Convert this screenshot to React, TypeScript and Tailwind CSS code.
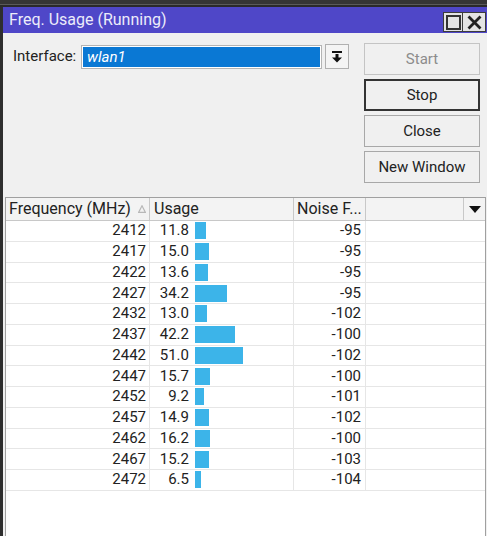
import React from "react";

const rows: [number, number, number][] = [
  [2412, 11.8, -95],
  [2417, 15.0, -95],
  [2422, 13.6, -95],
  [2427, 34.2, -95],
  [2432, 13.0, -102],
  [2437, 42.2, -100],
  [2442, 51.0, -102],
  [2447, 15.7, -100],
  [2452, 9.2, -101],
  [2457, 14.9, -102],
  [2462, 16.2, -100],
  [2467, 15.2, -103],
  [2472, 6.5, -104],
];

function Btn({ label, disabled, active }: { label: string; disabled?: boolean; active?: boolean }) {
  return (
    <div
      className={
        "h-[32px] w-[116px] flex items-center justify-center text-[15px] bg-[#f0f0f0] " +
        (active
          ? "border-2 border-[#333333] text-[#222222]"
          : disabled
          ? "border border-[#c4c4c4] text-[#8c8c8c]"
          : "border border-[#a8a8a8] text-[#222222]")
      }
    >
      {label}
    </div>
  );
}

export default function App() {
  return (
    <div
      className="w-[487px] h-[536px] bg-[#2e2e2e] flex flex-col overflow-hidden"
      style={{ fontFamily: "Roboto, 'Liberation Sans', sans-serif" }}
    >
      <div className="h-[7px] shrink-0 flex flex-col">
        <div className="h-[4px] bg-[#353535]" />
        <div className="h-[1px] bg-[#5a5a5a]" />
        <div className="h-[2px] bg-[#2a2a2a]" />
      </div>
      <div className="flex-1 ml-[3px] flex flex-col bg-[#f0f0f0] min-h-0">
        {/* title bar */}
        <div className="h-[26px] shrink-0 bg-[#4f47c8] flex items-center pl-[6px] pr-[1px]">
          <span className="text-[16px] text-[#ececfa] leading-none">Freq. Usage (Running)</span>
          <div className="ml-auto flex self-end mb-[1px]">
            <div className="w-[20px] h-[20px] bg-[#e4e4e4] border border-[#3c3c3c] flex items-center justify-center">
              <div className="w-[15px] h-[15px] border-2 border-[#333333]" />
            </div>
            <div className="w-[23px] h-[20px] bg-[#e4e4e4] border border-[#3c3c3c] border-l-0 flex items-center justify-center">
              <svg width="15" height="15" viewBox="0 0 15 15">
                <path d="M1.5 1.5 L13.5 13.5 M13.5 1.5 L1.5 13.5" stroke="#222" strokeWidth="2.8" />
              </svg>
            </div>
          </div>
        </div>

        {/* controls */}
        <div className="flex shrink-0 pt-[10px]">
          <div className="flex items-start pl-[10px] pt-[1px]">
            <div className="w-[68px] h-[25px] flex items-center text-[15px] text-[#222222]">Interface:</div>
            <div className="w-[241px] h-[24px] mt-[1px] border border-[#b4b4b4] bg-white p-[1px]">
              <div className="w-full h-full bg-[#0a78d4] flex items-center pl-[4px]">
                <span className="text-[15px] italic text-white leading-none">wlan1</span>
              </div>
            </div>
            <div className="ml-[3px] w-[24px] h-[25px] border border-[#b0b0b0] bg-[#f4f4f4] flex items-center justify-center">
              <svg width="10" height="12" viewBox="0 0 10 12">
                <rect x="0" y="0" width="10" height="2" fill="#111" />
                <rect x="3.5" y="3" width="3" height="4" fill="#111" />
                <path d="M0 6.5 L10 6.5 L5 11.5 Z" fill="#111" />
              </svg>
            </div>
          </div>
          <div className="ml-[15px] flex flex-col gap-[4px]">
            <Btn label="Start" disabled />
            <Btn label="Stop" active />
            <Btn label="Close" />
            <Btn label="New Window" />
          </div>
        </div>

        {/* table */}
        <div className="mt-[14px] ml-[2px] mr-[1px] flex-1 border border-[#a0a0a0] border-b-0 bg-white flex flex-col text-[#222222]">
          <div className="h-[23px] shrink-0 flex bg-[#f3f3f3] border-b border-[#c8c8c8] text-[16px]">
            <div className="w-[144px] flex items-center pl-[3px] border-r border-[#c8c8c8]">
              <span>Frequency (MHz)</span>
              <svg className="ml-[7px]" width="8" height="8" viewBox="0 0 8 8">
                <path d="M4 0.8 L7.3 7.3 L0.7 7.3 Z" fill="none" stroke="#b8b8b8" strokeWidth="1.2" />
              </svg>
            </div>
            <div className="w-[144px] flex items-center pl-[4px] border-r border-[#c8c8c8]">Usage</div>
            <div className="w-[72px] flex items-center pl-[3px] border-r border-[#c8c8c8]">Noise F...</div>
            <div className="flex-1 border-r border-[#c8c8c8]" />
            <div className="w-[21px] flex items-center justify-center">
              <svg width="12" height="7" viewBox="0 0 12 7">
                <path d="M0 0 L12 0 L6 7 Z" fill="#111" />
              </svg>
            </div>
          </div>
          {rows.map(([f, u, n]) => (
            <div key={f} className="h-[20.75px] shrink-0 flex border-b border-[#e6e6e6] text-[15px] leading-none">
              <div className="w-[144px] flex items-center justify-end pr-[3px] border-r border-[#e6e6e6]">{f}</div>
              <div className="w-[144px] flex items-center border-r border-[#e6e6e6]">
                <div className="w-[39px] text-right">{u.toFixed(1)}</div>
                <div className="ml-[6px] h-[17px] bg-[#3cb4e9]" style={{ width: `${u * 0.94}px` }} />
              </div>
              <div className="w-[72px] flex items-center justify-end pr-[4px] border-r border-[#e6e6e6]">{n}</div>
              <div className="flex-1" />
            </div>
          ))}
          <div className="flex-1" />
        </div>
      </div>
    </div>
  );
}
